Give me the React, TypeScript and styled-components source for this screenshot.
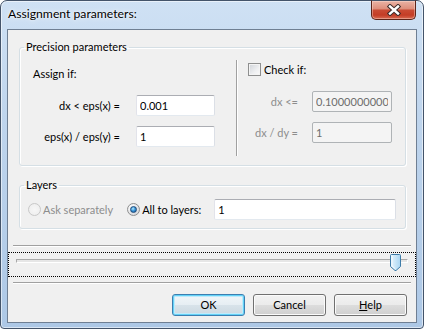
import React from "react";
import styled, { createGlobalStyle } from "styled-components";

const GlobalStyle = createGlobalStyle`
  html, body { margin: 0; padding: 0; background: #ffffff; }
  #root { width: 424px; height: 329px; }
`;

const Window = styled.div`
  box-sizing: border-box;
  width: 424px;
  height: 329px;
  border: 1px solid #44546a;
  border-radius: 7px 7px 4px 4px;
  padding: 0 6px 5px 6px;
  background: linear-gradient(180deg, #cfe1f4 0%, #bfd5ed 35%, #adc8e6 100%);
  box-shadow: inset 0 0 0 1px rgba(255, 255, 255, 0.55);
  display: flex;
  flex-direction: column;
  font-family: Lato, "Liberation Sans", sans-serif;
  font-size: 11px;
  color: #000;
`;

const TitleBar = styled.div`
  height: 28px;
  flex: none;
  display: flex;
  align-items: flex-start;
  justify-content: space-between;
`;

const Title = styled.div`
  padding: 5px 0 0 1px;
  font-size: 12.2px;
  line-height: 16px;
  color: #000;
  text-shadow: 0 0 6px rgba(255, 255, 255, 0.95), 0 0 2px #fff;
`;

const CloseButton = styled.div`
  box-sizing: border-box;
  width: 45px;
  height: 20px;
  margin: -1px 1px 0 0;
  border: 1px solid #5c2419;
  border-top-color: #44546a;
  border-radius: 0 0 5px 5px;
  background: linear-gradient(
    180deg,
    #eab3a5 0%,
    #de8f7c 42%,
    #c94a33 52%,
    #c43d26 78%,
    #d86a52 100%
  );
  box-shadow: inset 0 0 0 1px rgba(255, 230, 220, 0.4);
  display: flex;
  align-items: center;
  justify-content: center;
`;

const Client = styled.div`
  flex: 1;
  border: 1px solid #6f7f93;
  background: #f0f0f0;
  display: flex;
  flex-direction: column;
`;

const Groups = styled.div`
  display: flex;
  flex-direction: column;
  gap: 12px;
  padding: 10px 10px 0 11px;
`;

const Group = styled.fieldset`
  margin: 0;
  padding: 0;
  min-width: 0;
  border: 1px solid #d5dfe5;
  border-radius: 3px;
  box-shadow: inset 1px 1px 0 #ffffff, 1px 1px 0 #ffffff;
`;

const Legend = styled.legend`
  margin-left: 4px;
  padding: 0 2px;
  line-height: 14px;
`;

const PrecisionBody = styled.div`
  display: flex;
`;

const LeftColumn = styled.div`
  width: 216px;
  padding: 12px 0 18px 0;
`;

const Caption = styled.div`
  line-height: 16px;
  padding-left: 13px;
`;

const FormGrid = styled.div<{ $label: number; $field: number; $top: number; $gap: number }>`
  display: grid;
  grid-template-columns: ${(p) => p.$label}px ${(p) => p.$field}px;
  column-gap: ${(p) => p.$gap}px;
  row-gap: 10px;
  margin-top: ${(p) => p.$top}px;
  align-items: center;
`;

const FieldLabel = styled.label<{ $disabled?: boolean }>`
  text-align: right;
  white-space: nowrap;
  color: ${(p) => (p.$disabled ? "#8d8d8d" : "#000")};
`;

const VSeparator = styled.div`
  width: 1px;
  margin: 6px 0 9px 0;
  background: #a0a0a0;
  box-shadow: 1px 0 0 #ffffff;
`;

const RightColumn = styled.div`
  flex: 1;
  padding-top: 9px;
`;

const CheckRow = styled.label`
  display: flex;
  align-items: center;
  gap: 3px;
  padding-left: 11px;
  height: 13px;
`;

const CheckBox = styled.span`
  box-sizing: border-box;
  width: 13px;
  height: 13px;
  border: 1px solid #8e8f8f;
  background: linear-gradient(135deg, #cfd3d8 0%, #eeeff1 60%, #fbfbfb 100%);
  box-shadow: inset 0 0 0 1px #f4f4f4;
`;

const TextBox = styled.input`
  box-sizing: border-box;
  height: 21px;
  width: 100%;
  min-width: 0;
  margin: 0;
  padding: 0 3px;
  border: 1px solid;
  border-color: #abadb3 #dbdfe6 #e3e9ef #e2e3ea;
  border-radius: 2px;
  background: #ffffff;
  font: inherit;
  color: #000;
  outline: none;

  &:disabled {
    background: #f4f4f4;
    border-color: #afb3b6;
    color: #6d6d6d;
    -webkit-text-fill-color: #6d6d6d;
  }
`;

const LayersBody = styled.div`
  display: flex;
  align-items: center;
  padding: 7px 9px 8px 8px;
`;

const RadioOption = styled.label<{ $disabled?: boolean }>`
  display: flex;
  align-items: center;
  gap: 2px;
  white-space: nowrap;
  margin-right: 14px;
  color: ${(p) => (p.$disabled ? "#8d8d8d" : "#000")};
  &:last-of-type {
    margin-right: 13px;
  }
`;

const Radio = styled.span<{ $checked?: boolean; $disabled?: boolean }>`
  box-sizing: border-box;
  width: 13px;
  height: 13px;
  border-radius: 50%;
  border: 1px solid ${(p) => (p.$disabled ? "#c8c8c8" : "#8e8f8f")};
  background: ${(p) =>
    p.$disabled
      ? "radial-gradient(circle at 50% 50%, #f7f7f7 0%, #ececec 100%)"
      : "radial-gradient(circle at 35% 30%, #ffffff 0%, #dcdde0 70%, #cfd1d4 100%)"};
  display: flex;
  align-items: center;
  justify-content: center;

  &::after {
    content: "";
    display: ${(p) => (p.$checked ? "block" : "none")};
    box-sizing: border-box;
    width: 7px;
    height: 7px;
    border-radius: 50%;
    border: 1px solid #1f4a78;
    background: radial-gradient(circle at 40% 35%, #b8ecff 0%, #3a97da 45%, #0d4c8f 100%);
  }
`;

const HSeparator = styled.div<{ $top: number }>`
  margin: ${(p) => p.$top}px 5px 0 5px;
  border-top: 1px solid #a0a0a0;
  border-bottom: 1px solid #ffffff;
`;

const SliderFocus = styled.div`
  position: relative;
  box-sizing: border-box;
  height: 25px;
  margin-top: 5px;
  padding: 6px 7px 0 7px;
  border: 1px dotted #000;
`;

const Track = styled.div`
  box-sizing: border-box;
  height: 4px;
  border: 1px solid;
  border-color: #a9a9a9 #ffffff #ffffff #a9a9a9;
  background: #e6e6e6;
`;

const Thumb = styled.svg`
  position: absolute;
  top: 1px;
  display: block;
`;

const ButtonRow = styled.div`
  margin-top: auto;
  display: flex;
  justify-content: flex-end;
  gap: 8px;
  padding: 0 9px 6px 0;
`;

const Button = styled.button<{ $default?: boolean }>`
  box-sizing: border-box;
  width: 73px;
  height: 22px;
  padding: 0;
  margin: 0;
  font: inherit;
  color: #000;
  border: 1px solid ${(p) => (p.$default ? "#3c7fb1" : "#707070")};
  border-radius: 3px;
  background: ${(p) =>
    p.$default
      ? "linear-gradient(180deg, #f1f6f9 0%, #e6eef3 50%, #d8e3ea 50%, #ccd9e1 100%)"
      : "linear-gradient(180deg, #f2f2f2 0%, #ebebeb 50%, #dddddd 50%, #cfcfcf 100%)"};
  box-shadow: ${(p) =>
    p.$default ? "inset 0 0 0 1px #63d2f7, inset 0 0 0 2px #bfeafb" : "inset 0 0 0 1px #fbfbfb"};
  line-height: 18px;
`;

const Mnemonic = styled.span`
  text-decoration: underline;
`;

const CloseGlyph = () => (
  <svg width="14" height="12" viewBox="0 0 14 12">
    <path d="M3 2.5 L11 9.5 M11 2.5 L3 9.5" stroke="#3b2a28" strokeWidth="4.4" strokeLinecap="square" />
    <path d="M3 2.5 L11 9.5 M11 2.5 L3 9.5" stroke="#ffffff" strokeWidth="2.4" strokeLinecap="square" />
  </svg>
);

const SLIDER = { min: 0, max: 100, value: 100 };

export default function App() {
  const pos = (SLIDER.value - SLIDER.min) / (SLIDER.max - SLIDER.min);
  return (
    <>
      <GlobalStyle />
      <Window>
        <TitleBar>
          <Title>Assignment parameters:</Title>
          <CloseButton>
            <CloseGlyph />
          </CloseButton>
        </TitleBar>
        <Client>
          <Groups>
            <Group>
              <Legend>Precision parameters</Legend>
              <PrecisionBody>
                <LeftColumn>
                  <Caption>Assign if:</Caption>
                  <FormGrid $label={100} $field={79} $gap={16} $top={13}>
                    <FieldLabel>dx &lt; eps(x) =</FieldLabel>
                    <TextBox defaultValue="0.001" />
                    <FieldLabel>eps(x) / eps(y) =</FieldLabel>
                    <TextBox defaultValue="1" />
                  </FormGrid>
                </LeftColumn>
                <VSeparator />
                <RightColumn>
                  <CheckRow>
                    <CheckBox />
                    <span>Check if:</span>
                  </CheckRow>
                  <FormGrid $label={61} $field={80} $gap={14} $top={15}>
                    <FieldLabel $disabled>dx &lt;=</FieldLabel>
                    <TextBox disabled defaultValue="0.10000000000" />
                    <FieldLabel $disabled>dx / dy =</FieldLabel>
                    <TextBox disabled defaultValue="1" />
                  </FormGrid>
                </RightColumn>
              </PrecisionBody>
            </Group>
            <Group>
              <Legend>Layers</Legend>
              <LayersBody>
                <RadioOption $disabled>
                  <Radio $disabled />
                  <span>Ask separately</span>
                </RadioOption>
                <RadioOption>
                  <Radio $checked />
                  <span>All to layers:</span>
                </RadioOption>
                <TextBox defaultValue="1" />
              </LayersBody>
            </Group>
          </Groups>
          <HSeparator $top={16} />
          <SliderFocus>
            <Track />
            <Thumb
              width="11"
              height="18"
              viewBox="0 0 11 18"
              style={{ left: `calc(14px + ${pos} * (100% - 39px))` }}
            >
              <defs>
                <linearGradient id="thumbFill" x1="0" y1="0" x2="1" y2="0">
                  <stop offset="0" stopColor="#e9f5fd" />
                  <stop offset="0.5" stopColor="#c9e6f8" />
                  <stop offset="1" stopColor="#a9d5f2" />
                </linearGradient>
              </defs>
              <path
                d="M1.5 0.5 H9.5 A1 1 0 0 1 10.5 1.5 V12.5 L6 16.5 H5 L0.5 12.5 V1.5 A1 1 0 0 1 1.5 0.5 Z"
                fill="url(#thumbFill)"
                stroke="#3f7ca8"
              />
              <path d="M2 2 V12 L5.5 15" fill="none" stroke="#f4fbff" strokeWidth="1" />
            </Thumb>
          </SliderFocus>
          <HSeparator $top={5} />
          <ButtonRow>
            <Button $default>OK</Button>
            <Button>Cancel</Button>
            <Button>
              <Mnemonic>H</Mnemonic>elp
            </Button>
          </ButtonRow>
        </Client>
      </Window>
    </>
  );
}
